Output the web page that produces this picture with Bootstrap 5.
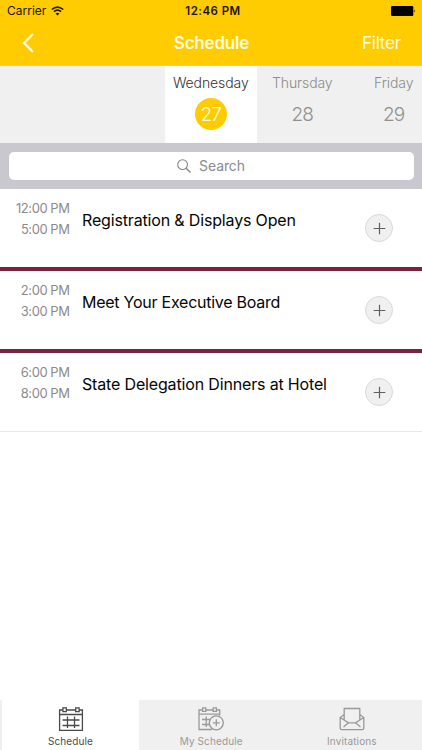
<!DOCTYPE html>
<html lang="en">
<head>
<meta charset="utf-8">
<meta name="viewport" content="width=device-width, initial-scale=1">
<title>Schedule</title>
<link href="https://cdn.jsdelivr.net/npm/bootstrap@5.3.0/dist/css/bootstrap.min.css" rel="stylesheet">
<style>
body{font-family:Inter,"Liberation Sans",sans-serif;background:#fff;color:#050505}
svg{display:block;flex:none}
.app{height:750px}
.top{background:#ffcc02;height:66px;border-bottom:1px solid #e3cd80}
.status{height:22px;padding:0 6px 0 7px;font-size:12px;line-height:22px;color:#1c1600}
.status>*{width:33.33%}
.carrier{letter-spacing:0;gap:5px}
.clock{font-weight:600;font-size:11.5px;letter-spacing:.45px;padding-left:3px}
.bar{height:43px;padding:0 21px 0 22px;color:#fffbe0}
.bar>*{width:33.33%}
.back{padding-bottom:2px}
.ttl{font-size:17px;font-weight:600;letter-spacing:-.2px;line-height:43px}
.filt{font-size:17px;line-height:43px;letter-spacing:-.2px}
.days{height:77px;background:#f0f0f0;padding-left:165px}
.day{width:91.5px;flex:none;padding-top:7px;font-size:14px;font-weight:300;line-height:20px;color:#8c8c8c;letter-spacing:-.1px}
.day.on{background:#fff;color:#333}
.num{width:32px;height:32px;margin-top:5px;font-size:19px;line-height:33px;font-weight:300;color:#8f8f8f;letter-spacing:-.9px}
.on .num{background:#ffcc02;color:#fffbe0}
.find{height:46px;background:#c9c8cf;padding:9px 8.5px}
.field{height:28px;border-radius:5px;font-size:14px;line-height:26px;color:#8a8a90;gap:8px;letter-spacing:-.1px}
.field span{margin-top:-1px}
.item{height:82px;border-bottom:4px solid #7b2142}
.item:last-child{height:79px;border-bottom:1px solid #e8e8e8}
.when{width:69.5px;padding-top:9px;font-size:13px;line-height:21px;color:#8b8b8b;letter-spacing:-.45px}
.what{margin-left:12.5px;padding-top:19px;font-size:16px;line-height:24px;letter-spacing:-.16px;white-space:nowrap}
.item:nth-child(2) .what{letter-spacing:-.25px}
.plus{width:28px;height:28px;margin:25px 29px 0 0;border:1px solid #d9d9d9;background:#f0f0f0}
.tabs{height:50px;background:#f0f0f0;padding-left:2px;color:#999}
.tab{width:137px;flex:none;padding-top:7px;margin-right:3.7px;font-size:10px;line-height:14px;letter-spacing:.12px}
.tab:last-child{margin-right:0}
.tab.on{background:#fff;color:#4a4a4a}
.tab svg{margin-bottom:1px}
</style>
</head>
<body>
<div class="app d-flex flex-column overflow-hidden">
<header class="top">
 <div class="status d-flex">
  <div class="carrier d-flex align-items-center"><span>Carrier</span>
   <svg width="13" height="10" viewBox="0 0 13 10" fill="none" stroke="#1c1600" stroke-width="1.6"><path d="M.8 3.5Q6.5-1.3 12.2 3.5M2.9 5.7Q6.5 2.7 10.1 5.7"/><path d="M4.5 7.4Q6.5 5.9 8.5 7.4L6.5 9.5z" fill="#1c1600" stroke="none"/></svg></div>
  <div class="text-center"><span class="clock">12:46 PM</span></div>
  <div class="d-flex justify-content-end align-items-center"><svg width="25" height="10" viewBox="0 0 25 10"><rect width="22.3" height="10" rx="1.2"/><path d="M23.2 3.5q1.6 1.5 0 3z"/></svg></div>
 </div>
 <div class="bar d-flex">
  <div class="back d-flex align-items-center"><svg width="13" height="20" viewBox="0 0 13 20" fill="none" stroke="#fffbe0" stroke-width="2.4"><path d="M11 1 2.2 10 11 19"/></svg></div>
  <div class="ttl text-center">Schedule</div>
  <div class="filt text-end">Filter</div>
 </div>
</header>
<nav class="days d-flex overflow-hidden text-center">
 <div class="day on">Wednesday<div class="num rounded-circle mx-auto">27</div></div>
 <div class="day">Thursday<div class="num mx-auto">28</div></div>
 <div class="day">Friday<div class="num mx-auto">29</div></div>
</nav>
<div class="find"><div class="field bg-white d-flex align-items-center justify-content-center">
 <svg width="14" height="14" viewBox="0 0 14 14" fill="none" stroke="#85858b" stroke-width="1.1"><circle cx="5.6" cy="5.6" r="4.9"/><path d="m9.2 9.2 4.3 4.3" stroke-width="1.4"/></svg><span>Search</span></div></div>
<main class="flex-grow-1">
 <div class="item d-flex"><div class="when text-end">12:00 PM<br>5:00 PM</div><div class="what">Registration &amp; Displays Open</div><div class="plus rounded-circle ms-auto d-flex align-items-center justify-content-center"><svg width="13" height="13" viewBox="0 0 13 13" stroke="#606060" stroke-width="1.2"><path d="M6.5.7v11.6M.7 6.5h11.6"/></svg></div></div>
 <div class="item d-flex"><div class="when text-end">2:00 PM<br>3:00 PM</div><div class="what">Meet Your Executive Board</div><div class="plus rounded-circle ms-auto d-flex align-items-center justify-content-center"><svg width="13" height="13" viewBox="0 0 13 13" stroke="#606060" stroke-width="1.2"><path d="M6.5.7v11.6M.7 6.5h11.6"/></svg></div></div>
 <div class="item d-flex"><div class="when text-end">6:00 PM<br>8:00 PM</div><div class="what">State Delegation Dinners at Hotel</div><div class="plus rounded-circle ms-auto d-flex align-items-center justify-content-center"><svg width="13" height="13" viewBox="0 0 13 13" stroke="#606060" stroke-width="1.2"><path d="M6.5.7v11.6M.7 6.5h11.6"/></svg></div></div>
</main>
<footer class="tabs d-flex text-center">
 <div class="tab on d-flex flex-column align-items-center"><svg width="26" height="26" viewBox="0 0 26 26" fill="none" stroke="currentColor" stroke-width="1.3"><path d="M4.900 3H1.600v20.400h22.800V3h-3.300M8.300 3h9.400M1.600 7.500h22.800M4.500 13h17M4.500 18.500h17M9.500 9.500v11.500M16.500 9.500v11.500"/><path d="M4.900.8h3.400v3.800H4.900zM17.700.8h3.400v3.800h-3.400z"/></svg>Schedule</div>
 <div class="tab d-flex flex-column align-items-center"><svg width="26" height="26" viewBox="0 0 26 26" fill="none" stroke="currentColor" stroke-width="1.3"><path d="M4.600 3H1v19.500h13M7.800 3h7.400M18.400 3h3.300v5.500M1 7.200h20.700M4 12.500h9M4 17.500h7M8.200 9.500v10.500M14.500 9.500v1.500"/><path d="M4.600.8h3.200v3.600H4.600zM15.200.8h3.200v3.600h-3.200z"/><circle cx="18.300" cy="15.800" r="7"/><path d="M18.300 12.300v7M14.800 15.800h7"/></svg>My Schedule</div>
 <div class="tab d-flex flex-column align-items-center"><svg width="26" height="26" viewBox="0 0 26 26" fill="none" stroke="currentColor" stroke-width="1.300"><path d="M5.200 12.500V1.500h15.600v11M5.200 7.500 1.200 10.500v10.800q0 1.400 1.400 1.400h20.800q1.400 0 1.400-1.400V10.500l-4-3M1.200 10.500l8.300 5.300h7l8.300-5.300M9.500 15.800 4.500 20M16.500 15.800l5 4.200"/></svg>Invitations</div>
</footer>
</div>
<script src="https://cdn.jsdelivr.net/npm/bootstrap@5.3.0/dist/js/bootstrap.bundle.min.js"></script>
</body>
</html>
